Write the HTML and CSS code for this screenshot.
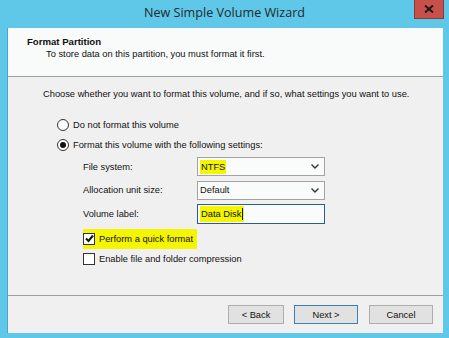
FILE: index.html
```html
<!DOCTYPE html>
<html lang="en">
    <head>
        <meta charset="UTF-8">
        <title>New Simple Volume Wizard</title>
        <link rel="stylesheet" href="styles.css">
    </head>
    <body>
        <div class="window">
            <div class="titlebar">
                <span></span>
                <div class="title">New Simple Volume Wizard</div>
                <div class="close">
                    <svg width="10" height="8" viewBox="0 0 10 8"><path d="M1 0.5 L9 7.5 M9 0.5 L1 7.5" stroke="#1a1a1a" stroke-width="2"/></svg>
                </div>
            </div>
            <div class="client">
                <div class="header">
                    <p class="head-title">Format Partition</p>
                    <p class="head-sub">To store data on this partition, you must format it first.</p>
                </div>
                <div class="body">
                    <p class="intro">Choose whether you want to format this volume, and if so, what settings you want to use.</p>
                    <div class="radioitem">
                        <span class="radio"></span>Do not format this volume
                    </div>
                    <div class="radioitem">
                        <span class="radio checked"></span>Format this volume with the following settings:
                    </div>
                    <div class="settings">
                        <div class="row">
                            <span class="label">File system:</span>
                            <div class="select">
                                <span class="mark">NTFS</span>
                                <svg class="arrow" width="8" height="5" viewBox="0 0 8 5"><path d="M0.5 0.5 L4 4 L7.5 0.5" stroke="#333" stroke-width="1.4" fill="none"/></svg>
                            </div>
                        </div>
                        <div class="row">
                            <span class="label">Allocation unit size:</span>
                            <div class="select">
                                <span>Default</span>
                                <svg class="arrow" width="8" height="5" viewBox="0 0 8 5"><path d="M0.5 0.5 L4 4 L7.5 0.5" stroke="#333" stroke-width="1.4" fill="none"/></svg>
                            </div>
                        </div>
                        <div class="row">
                            <span class="label">Volume label:</span>
                            <div class="input"><span class="mark">Data Disk<span class="caret"></span></span></div>
                        </div>
                        <div class="checkitem quick">
                            <span class="mark mark-wide"><span class="check">
                                <svg width="9" height="9" viewBox="0 0 9 9"><path d="M1 4.5 L3.5 7 L8 1.5" stroke="#111" stroke-width="2" fill="none"/></svg>
                            </span>Perform a quick format</span>
                        </div>
                        <div class="checkitem">
                            <span class="check"></span>Enable file and folder compression
                        </div>
                    </div>
                </div>
                <div class="footer">
                    <button class="btn btn-back">&lt; Back</button>
                    <button class="btn btn-next">Next &gt;</button>
                    <button class="btn btn-cancel">Cancel</button>
                </div>
            </div>
        </div>
    </body>
</html>
```
FILE: styles.css
```css
* {
    box-sizing: border-box;
}

body {
    margin: 0;
    font-family: "Liberation Sans", Arial, sans-serif;
    font-size: 9.3px;
    color: #111;
}

p {
    margin: 0;
}

.window {
    width: 449px;
    height: 338px;
    background-color: #5fc7e7;
    display: flex;
    flex-direction: column;
}

.titlebar {
    height: 28px;
    display: grid;
    grid-template-columns: 1fr auto 1fr;
    align-items: start;
}

.title {
    font-family: "Open Sans", sans-serif;
    font-size: 12.6px;
    color: #1e2a30;
    padding-top: 4px;
}

.close {
    justify-self: end;
    width: 30px;
    height: 19px;
    margin-right: 5px;
    background-color: #c7504b;
    border: 1px solid #8e3a36;
    border-top: none;
    display: flex;
    align-items: center;
    justify-content: center;
}

.client {
    flex: 1;
    margin: 0 6px 5px 7px;
    background-color: #f0f0f0;
    border-left: 1px solid #4aa9c6;
    display: flex;
    flex-direction: column;
}

.header {
    height: 49px;
    background-color: #f8fbf9;
    border-bottom: 1px solid #a0a0a0;
    padding: 8px 0 0 19px;
}

.head-title {
    font-weight: bold;
    font-size: 9.6px;
}

.head-sub {
    padding: 2px 0 0 19px;
}

.body {
    flex: 1;
    padding: 12px 0 0 35px;
}

.intro {
    margin-bottom: 16px;
}

.radioitem {
    display: flex;
    align-items: center;
    height: 20px;
    padding-left: 14px;
}

.radio {
    width: 12px;
    height: 12px;
    border: 1px solid #333;
    border-radius: 50%;
    background-color: #fff;
    margin-right: 4px;
    display: flex;
    align-items: center;
    justify-content: center;
}

.radio.checked::after {
    content: "";
    width: 6px;
    height: 6px;
    border-radius: 50%;
    background-color: #111;
}

.settings {
    padding-left: 40px;
    padding-top: 0;
}

.row {
    display: flex;
    align-items: center;
    height: 23.5px;
}

.label {
    width: 114px;
}

.select,
.input {
    width: 128px;
    height: 19px;
    border: 1px solid #a3a3a3;
    background-color: #fafcfb;
    display: flex;
    align-items: center;
    justify-content: space-between;
    padding: 0 5px 0 2px;
}

.input {
    height: 20px;
    border-color: #2a5f88;
}

.mark {
    background-color: #f4f500;
    padding: 2px 1px;
    display: inline-flex;
    align-items: center;
}

.caret {
    width: 1px;
    height: 12px;
    background-color: #111;
    margin-left: 1px;
}

.checkitem {
    display: flex;
    align-items: center;
    height: 20px;
}

.quick {
    margin-top: 3px;
}

.mark-wide {
    padding: 4px 4px 4px 0;
}

.check {
    width: 12px;
    height: 12px;
    border: 1px solid #333;
    background-color: #fff;
    margin-right: 4px;
    display: flex;
    align-items: center;
    justify-content: center;
}

.footer {
    height: 38px;
    border-top: 1px solid #a0a0a0;
    display: flex;
    align-items: center;
    justify-content: flex-end;
    padding-right: 10px;
}

.btn {
    font-family: "Liberation Sans", Arial, sans-serif;
    font-size: 9.3px;
    color: #111;
    height: 19px;
    background-color: #e1e1e1;
    border: 1px solid #adadad;
    padding: 0;
}

.btn-back {
    width: 56px;
}

.btn-next {
    width: 64px;
    margin-left: 10px;
    border-color: #3c7fb1;
}

.btn-cancel {
    width: 64px;
    margin-left: 11px;
}
```
